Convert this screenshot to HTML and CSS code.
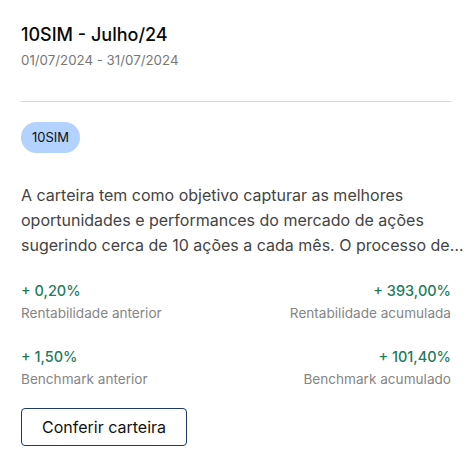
FILE: index.html
```html
<!DOCTYPE html>
<html lang="pt-BR">
<head>
    <meta charset="UTF-8">
    <meta name="viewport" content="width=device-width, initial-scale=1.0">
    <title>10SIM - Julho/24</title>
    <link rel="stylesheet" href="styles.css">
</head>
<body>
    <div class="card">
        <div class="card-header">
            <h1 class="card-title">10SIM - Julho/24</h1>
            <div class="card-period">01/07/2024 - 31/07/2024</div>
        </div>
        <div class="tag">10SIM</div>
        <p class="card-text">A carteira tem como objetivo capturar as melhores oportunidades e performances do mercado de ações sugerindo cerca de 10 ações a cada mês. O processo de…</p>
        <div class="stats">
            <div class="stat">
                <span class="stat-value">+ 0,20%</span>
                <span class="stat-label">Rentabilidade anterior</span>
            </div>
            <div class="stat stat-right">
                <span class="stat-value">+ 393,00%</span>
                <span class="stat-label">Rentabilidade acumulada</span>
            </div>
            <div class="stat">
                <span class="stat-value">+ 1,50%</span>
                <span class="stat-label">Benchmark anterior</span>
            </div>
            <div class="stat stat-right">
                <span class="stat-value">+ 101,40%</span>
                <span class="stat-label">Benchmark acumulado</span>
            </div>
        </div>
        <button type="button" class="card-button">Conferir carteira</button>
    </div>
</body>
</html>
```

FILE: styles.css
```css
body {
    margin: 0;
    padding: 0;
    background-color: #fff;
    font-family: 'Inter', 'Liberation Sans', sans-serif;
}
.card {
    width: 430px;
    padding: 0 25px 0 21px;
}
.card-header {
    padding-top: 23px;
    padding-bottom: 32px;
    border-bottom: 1px solid #d6d6d6;
}
.card-title {
    margin: 0;
    font-size: 18px;
    font-weight: 500;
    line-height: 24px;
    color: #0a0a0a;
}
.card-period {
    margin-top: 4px;
    font-size: 13.3px;
    line-height: 18px;
    color: #777;
}
.tag {
    display: inline-block;
    margin-top: 20px;
    padding: 0 11px;
    height: 31px;
    line-height: 31px;
    border-radius: 16px;
    background-color: #b3d2fe;
    font-size: 13px;
    color: #111;
}
.card-text {
    margin: 30px -14px 0 0;
    font-size: 16px;
    line-height: 25px;
    color: #444;
}
.stats {
    display: grid;
    grid-template-columns: 1fr 1fr;
    row-gap: 22px;
    margin-top: 23px;
}
.stat {
    display: flex;
    flex-direction: column;
}
.stat-right {
    align-items: flex-end;
}
.stat-value {
    font-size: 14.5px;
    font-weight: 500;
    line-height: 20px;
    color: #1d7c5c;
}
.stat-label {
    font-size: 13.6px;
    line-height: 24px;
    color: #858585;
}
.card-button {
    margin-top: 17px;
    padding: 0 20px;
    height: 38px;
    background: #fff;
    border: 1px solid #1c3a6e;
    border-radius: 4px;
    font-family: 'Inter', 'Liberation Sans', sans-serif;
    font-size: 16px;
    color: #111;
    cursor: pointer;
}
```
